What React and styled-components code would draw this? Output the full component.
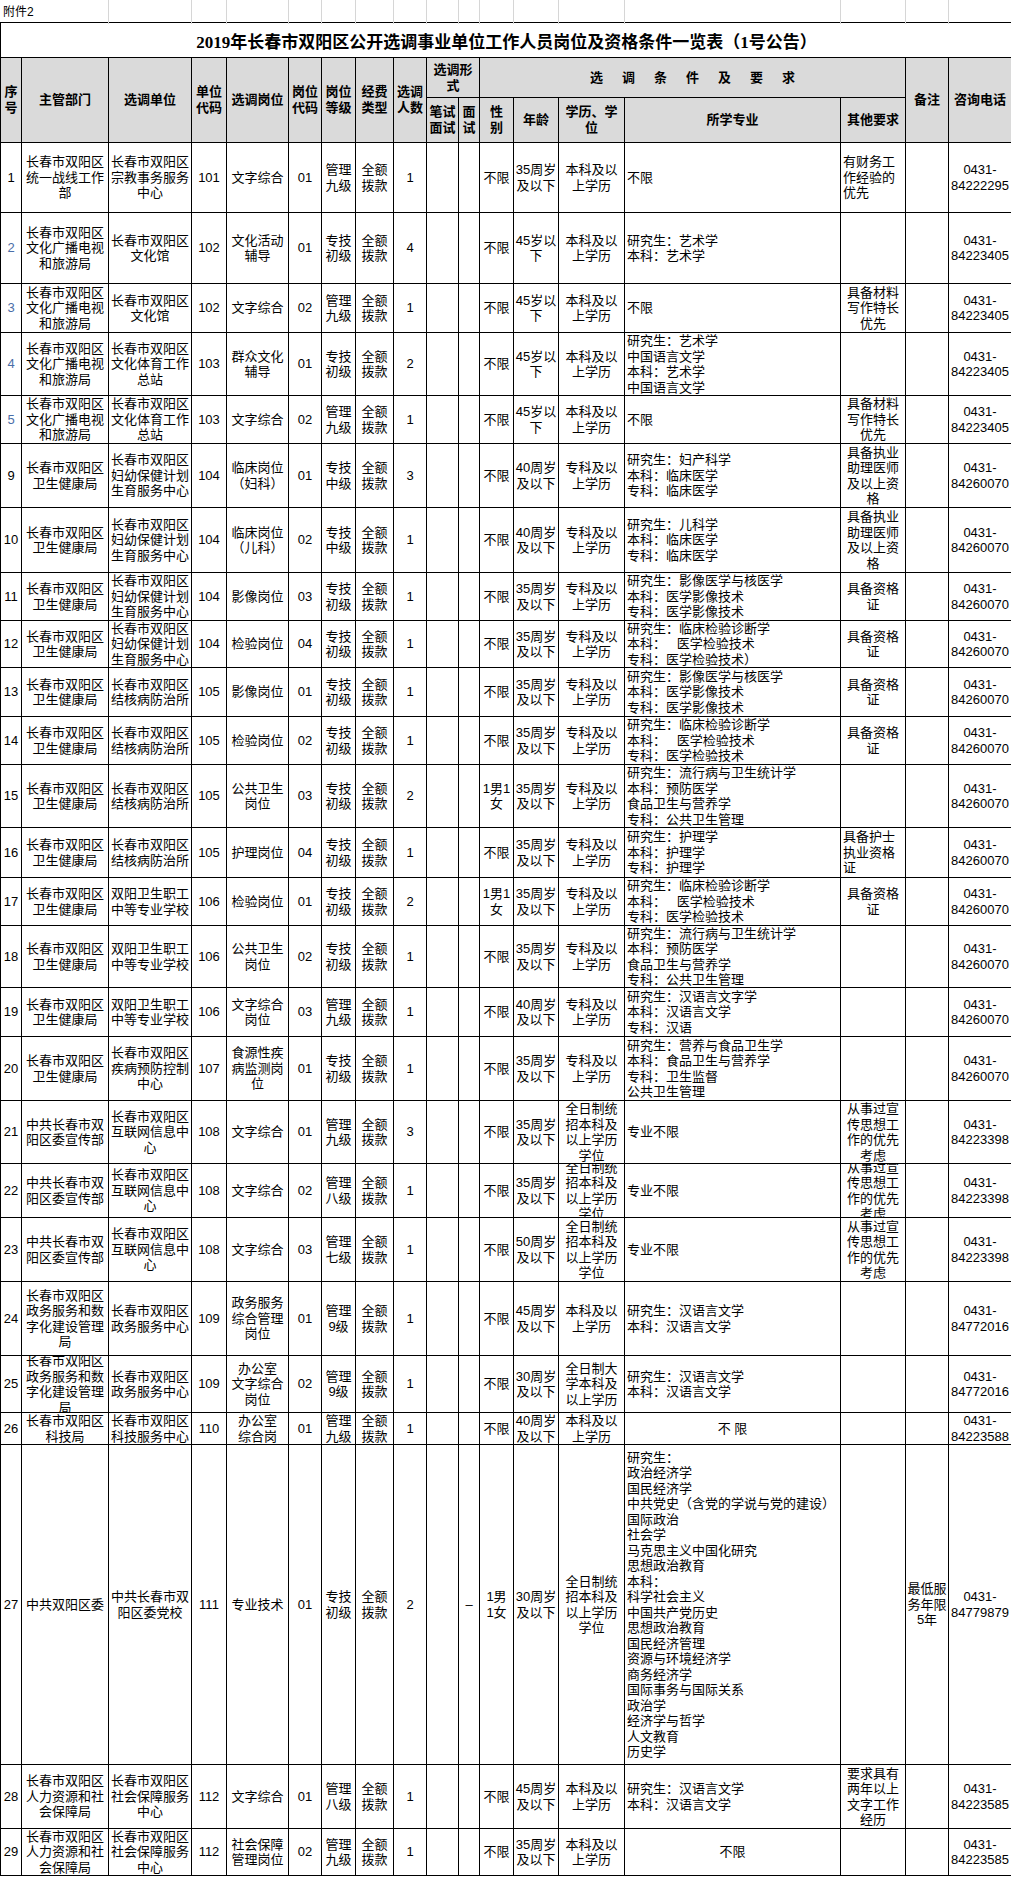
import React from "react";
import styled, { createGlobalStyle } from "styled-components";

const COLS = [21, 87, 83, 35, 62, 33, 34, 38, 33, 32, 21, 34, 45, 66, 216, 65, 43, 63];
const TEMPLATE = COLS.map((w) => `${w}px`).join(" ");

const GlobalStyle = createGlobalStyle`
  html, body { margin: 0; padding: 0; background: #fff; overflow: hidden; }
  body {
    font-family: "Liberation Sans", "Noto Sans CJK SC", sans-serif;
    font-size: 13px;
    color: #000;
  }
`;

const Sheet = styled.div`
  width: 1012px;
`;

const NoteRow = styled.div`
  display: grid;
  grid-template-columns: ${TEMPLATE};
  height: 22px;
  width: 1012px;
  padding-left: 1px;
  box-sizing: border-box;
`;

const NoteCell = styled.div`
  grid-column: span ${(p) => p.$span || 1};
  border-right: 1px solid #d6d6d6;
  font-size: 12px;
  line-height: 24px;
  padding-left: 2px;
  white-space: nowrap;
  margin-left: ${(p) => (p.$first ? "-1px" : "0")};
`;

const Table = styled.div`
  width: 1011px;
  border-left: 1px solid #000;
  border-top: 1px solid #000;
`;

const Title = styled.div`
  height: 35px;
  box-sizing: border-box;
  border-bottom: 1px solid #000;
  display: flex;
  align-items: center;
  justify-content: center;
  font-family: "Liberation Serif", "Noto Sans CJK SC", serif;
  font-size: 17px;
  font-weight: bold;
  padding-top: 1px;
`;

const Head = styled.div`
  display: grid;
  grid-template-columns: ${TEMPLATE};
  grid-template-rows: 40px 45px;
  background: #dadada;
`;

const BaseCell = styled.div`
  box-sizing: border-box;
  border-right: 1px solid #000;
  border-bottom: 1px solid #000;
  display: flex;
  align-items: center;
  justify-content: ${(p) => (p.$align === "left" ? "flex-start" : "center")};
  padding-left: ${(p) => (p.$align === "left" ? "2px" : "0")};
  overflow: hidden;
  min-width: 0;
`;

const HeadCell = styled(BaseCell)`
  grid-column: ${(p) => p.$c} / span ${(p) => p.$cs || 1};
  grid-row: ${(p) => p.$r} / span ${(p) => p.$rs || 1};
  font-weight: bold;
`;

const HeadText = styled.span`
  white-space: pre;
  text-align: center;
  line-height: 16px;
  letter-spacing: ${(p) => (p.$spread ? "19px" : "0")};
  padding-left: ${(p) => (p.$spread ? "19px" : "0")};
`;

const Row = styled.div`
  display: grid;
  grid-template-columns: ${TEMPLATE};
  grid-template-rows: ${(p) => p.$h}px;
`;

const Text = styled.span`
  white-space: pre;
  line-height: 15.5px;
  text-align: ${(p) => (p.$align === "left" ? "left" : "center")};
  color: ${(p) => (p.$blue ? "#4a6ea8" : "#000")};
`;

/* ---------- data ---------- */
const QK = "全额\n拨款";
const WG = "长春市双阳区\n文化广播电视\n和旅游局";
const WT = "长春市双阳区\n文化体育工作\n总站";
const WHG = "长春市双阳区\n文化馆";
const WJ = "长春市双阳区\n卫生健康局";
const FY = "长春市双阳区\n妇幼保健计划\n生育服务中心";
const JH = "长春市双阳区\n结核病防治所";
const WX = "双阳卫生职工\n中等专业学校";
const XC = "中共长春市双\n阳区委宣传部";
const HL = "长春市双阳区\n互联网信息中\n心";
const ZW = "长春市双阳区\n政务服务和数\n字化建设管理\n局";
const ZWC = "长春市双阳区\n政务服务中心";
const RS = "长春市双阳区\n人力资源和社\n会保障局";
const SB = "长春市双阳区\n社会保障服务\n中心";
const BK = "本科及以\n上学历";
const ZK = "专科及以\n上学历";
const QR = "全日制统\n招本科及\n以上学历\n学位";
const A35 = "35周岁\n及以下";
const A40 = "40周岁\n及以下";
const A45 = "45岁以\n下";
const JG = "专技\n初级";
const JZ = "专技\n中级";
const G9 = "管理\n九级";
const P405 = "0431-\n84223405";
const P070 = "0431-\n84260070";
const P398 = "0431-\n84223398";
const P016 = "0431-\n84772016";
const P585 = "0431-\n84223585";
const ZGZ = "具备资格\n证";
const CL = "具备材料\n写作特长\n优先";
const ZY = "具备执业\n助理医师\n及以上资\n格";
const XCQ = "从事过宣\n传思想工\n作的优先\n考虑";
const YX = "研究生：影像医学与核医学\n本科：医学影像技术\n专科：医学影像技术";
const JY = "研究生：临床检验诊断学\n本科：   医学检验技术\n专科：医学检验技术";
const GW = "研究生：流行病与卫生统计学\n本科：预防医学\n食品卫生与营养学\n专科：公共卫生管理";
const HY = "研究生：汉语言文学\n本科：汉语言文学";

const LONG = [
  "研究生：",
  "政治经济学",
  "国民经济学",
  "中共党史（含党的学说与党的建设）",
  "国际政治",
  "社会学",
  "马克思主义中国化研究",
  "思想政治教育",
  "本科：",
  "科学社会主义",
  "中国共产党历史",
  "思想政治教育",
  "国民经济管理",
  "资源与环境经济学",
  "商务经济学",
  "国际事务与国际关系",
  "政治学",
  "经济学与哲学",
  "人文教育",
  "历史学",
].join("\n");

const ROWS = [
  { h: 70, otherLeft: true, c: ["1", "长春市双阳区\n统一战线工作\n部", "长春市双阳区\n宗教事务服务\n中心", "101", "文字综合", "01", G9, QK, "1", "", "", "不限", "35周岁\n及以下", BK, "不限", "有财务工\n作经验的\n优先", "", "0431-\n84222295"] },
  { h: 71, blue: true, c: ["2", WG, WHG, "102", "文化活动\n辅导", "01", JG, QK, "4", "", "", "不限", A45, BK, "研究生：艺术学\n本科：艺术学", "", "", P405] },
  { h: 49, blue: true, c: ["3", WG, WHG, "102", "文字综合", "02", G9, QK, "1", "", "", "不限", A45, BK, "不限", CL, "", P405] },
  { h: 63, blue: true, c: ["4", WG, WT, "103", "群众文化\n辅导", "01", JG, QK, "2", "", "", "不限", A45, BK, "研究生：艺术学\n中国语言文学\n本科：艺术学\n中国语言文学", "", "", P405] },
  { h: 48, blue: true, c: ["5", WG, WT, "103", "文字综合", "02", G9, QK, "1", "", "", "不限", A45, BK, "不限", CL, "", P405] },
  { h: 64, c: ["9", WJ, FY, "104", "临床岗位\n（妇科）", "01", JZ, QK, "3", "", "", "不限", A40, ZK, "研究生：妇产科学\n本科：临床医学\n专科：临床医学", ZY, "", P070] },
  { h: 65, c: ["10", WJ, FY, "104", "临床岗位\n（儿科）", "02", JZ, QK, "1", "", "", "不限", A40, ZK, "研究生：儿科学\n本科：临床医学\n专科：临床医学", ZY, "", P070] },
  { h: 48, c: ["11", WJ, FY, "104", "影像岗位", "03", JG, QK, "1", "", "", "不限", A35, ZK, YX, ZGZ, "", P070] },
  { h: 47, c: ["12", WJ, FY, "104", "检验岗位", "04", JG, QK, "1", "", "", "不限", A35, ZK, "研究生：临床检验诊断学\n本科：   医学检验技术\n专科：医学检验技术）", ZGZ, "", P070] },
  { h: 49, c: ["13", WJ, JH, "105", "影像岗位", "01", JG, QK, "1", "", "", "不限", A35, ZK, YX, ZGZ, "", P070] },
  { h: 48, c: ["14", WJ, JH, "105", "检验岗位", "02", JG, QK, "1", "", "", "不限", A35, ZK, JY, ZGZ, "", P070] },
  { h: 63, c: ["15", WJ, JH, "105", "公共卫生\n岗位", "03", JG, QK, "2", "", "", "1男1\n女", A35, ZK, GW, "", "", P070] },
  { h: 50, otherLeft: true, c: ["16", WJ, JH, "105", "护理岗位", "04", JG, QK, "1", "", "", "不限", A35, ZK, "研究生：护理学\n本科：护理学\n专科：护理学", "具备护士\n执业资格\n证", "", P070] },
  { h: 48, c: ["17", WJ, WX, "106", "检验岗位", "01", JG, QK, "2", "", "", "1男1\n女", A35, ZK, JY, ZGZ, "", P070] },
  { h: 62, c: ["18", WJ, WX, "106", "公共卫生\n岗位", "02", JG, QK, "1", "", "", "不限", A35, ZK, GW, "", "", P070] },
  { h: 49, c: ["19", WJ, WX, "106", "文字综合\n岗位", "03", G9, QK, "1", "", "", "不限", A40, ZK, "研究生：汉语言文字学\n本科：汉语言文学\n专科：汉语", "", "", P070] },
  { h: 64, c: ["20", WJ, "长春市双阳区\n疾病预防控制\n中心", "107", "食源性疾\n病监测岗\n位", "01", JG, QK, "1", "", "", "不限", A35, ZK, "研究生：营养与食品卫生学\n本科：食品卫生与营养学\n专科：卫生监督\n公共卫生管理", "", "", P070] },
  { h: 63, c: ["21", XC, HL, "108", "文字综合", "01", G9, QK, "3", "", "", "不限", A35, QR, "专业不限", XCQ, "", P398] },
  { h: 54, c: ["22", XC, HL, "108", "文字综合", "02", "管理\n八级", QK, "1", "", "", "不限", A35, QR, "专业不限", XCQ, "", P398] },
  { h: 64, c: ["23", XC, HL, "108", "文字综合", "03", "管理\n七级", QK, "1", "", "", "不限", "50周岁\n及以下", QR, "专业不限", XCQ, "", P398] },
  { h: 74, c: ["24", ZW, ZWC, "109", "政务服务\n综合管理\n岗位", "01", "管理\n9级", QK, "1", "", "", "不限", "45周岁\n及以下", BK, HY, "", "", P016] },
  { h: 57, c: ["25", ZW, ZWC, "109", "办公室\n文字综合\n岗位", "02", "管理\n9级", QK, "1", "", "", "不限", "30周岁\n及以下", "全日制大\n学本科及\n以上学历", HY, "", "", P016] },
  { h: 32, majorCenter: true, c: ["26", "长春市双阳区\n科技局", "长春市双阳区\n科技服务中心", "110", "办公室\n综合岗", "01", G9, QK, "1", "", "", "不限", A40, BK, "不 限", "", "", "0431-\n84223588"] },
  { h: 320, c: ["27", "中共双阳区委", "中共长春市双\n阳区委党校", "111", "专业技术", "01", JG, QK, "2", "", "–", "1男\n1女", "30周岁\n及以下", QR, LONG, "", "最低服\n务年限\n5年", "0431-\n84779879"] },
  { h: 64, c: ["28", RS, SB, "112", "文字综合", "01", "管理\n八级", QK, "1", "", "", "不限", "45周岁\n及以下", BK, HY, "要求具有\n两年以上\n文字工作\n经历", "", P585] },
  { h: 47, majorCenter: true, c: ["29", RS, SB, "112", "社会保障\n管理岗位", "02", G9, QK, "1", "", "", "不限", A35, BK, "不限", "", "", P585] },
];

const HEAD = [
  { t: "序\n号", c: 1, r: 1, rs: 2 },
  { t: "主管部门", c: 2, r: 1, rs: 2 },
  { t: "选调单位", c: 3, r: 1, rs: 2 },
  { t: "单位\n代码", c: 4, r: 1, rs: 2 },
  { t: "选调岗位", c: 5, r: 1, rs: 2 },
  { t: "岗位\n代码", c: 6, r: 1, rs: 2 },
  { t: "岗位\n等级", c: 7, r: 1, rs: 2 },
  { t: "经费\n类型", c: 8, r: 1, rs: 2 },
  { t: "选调\n人数", c: 9, r: 1, rs: 2 },
  { t: "选调形\n式", c: 10, cs: 2, r: 1 },
  { t: "选调条件及要求", c: 12, cs: 5, r: 1, spread: true },
  { t: "备注", c: 17, r: 1, rs: 2 },
  { t: "咨询电话", c: 18, r: 1, rs: 2 },
  { t: "笔试\n面试", c: 10, r: 2 },
  { t: "面\n试", c: 11, r: 2 },
  { t: "性\n别", c: 12, r: 2 },
  { t: "年龄", c: 13, r: 2 },
  { t: "学历、学\n位", c: 14, r: 2 },
  { t: "所学专业", c: 15, r: 2 },
  { t: "其他要求", c: 16, r: 2 },
];

function alignFor(row, i) {
  if (i === 14) return row.majorCenter ? "center" : "left";
  if (i === 15) return row.otherLeft ? "left" : "center";
  return "center";
}

export default function App() {
  return (
    <Sheet>
      <GlobalStyle />
      <NoteRow>
        <NoteCell $span={2}>附件2</NoteCell>
        {COLS.slice(2).map((_, i) => (
          <NoteCell key={i} />
        ))}
      </NoteRow>
      <Table>
        <Title>2019年长春市双阳区公开选调事业单位工作人员岗位及资格条件一览表（1号公告）</Title>
        <Head>
          {HEAD.map((h, i) => (
            <HeadCell key={i} $c={h.c} $cs={h.cs} $r={h.r} $rs={h.rs}>
              <HeadText $spread={h.spread}>{h.t}</HeadText>
            </HeadCell>
          ))}
        </Head>
        {ROWS.map((row, ri) => (
          <Row key={ri} $h={row.h}>
            {row.c.map((txt, i) => {
              const a = alignFor(row, i);
              return (
                <BaseCell key={i} $align={a}>
                  <Text $align={a} $blue={i === 0 && row.blue}>
                    {txt}
                  </Text>
                </BaseCell>
              );
            })}
          </Row>
        ))}
      </Table>
    </Sheet>
  );
}
